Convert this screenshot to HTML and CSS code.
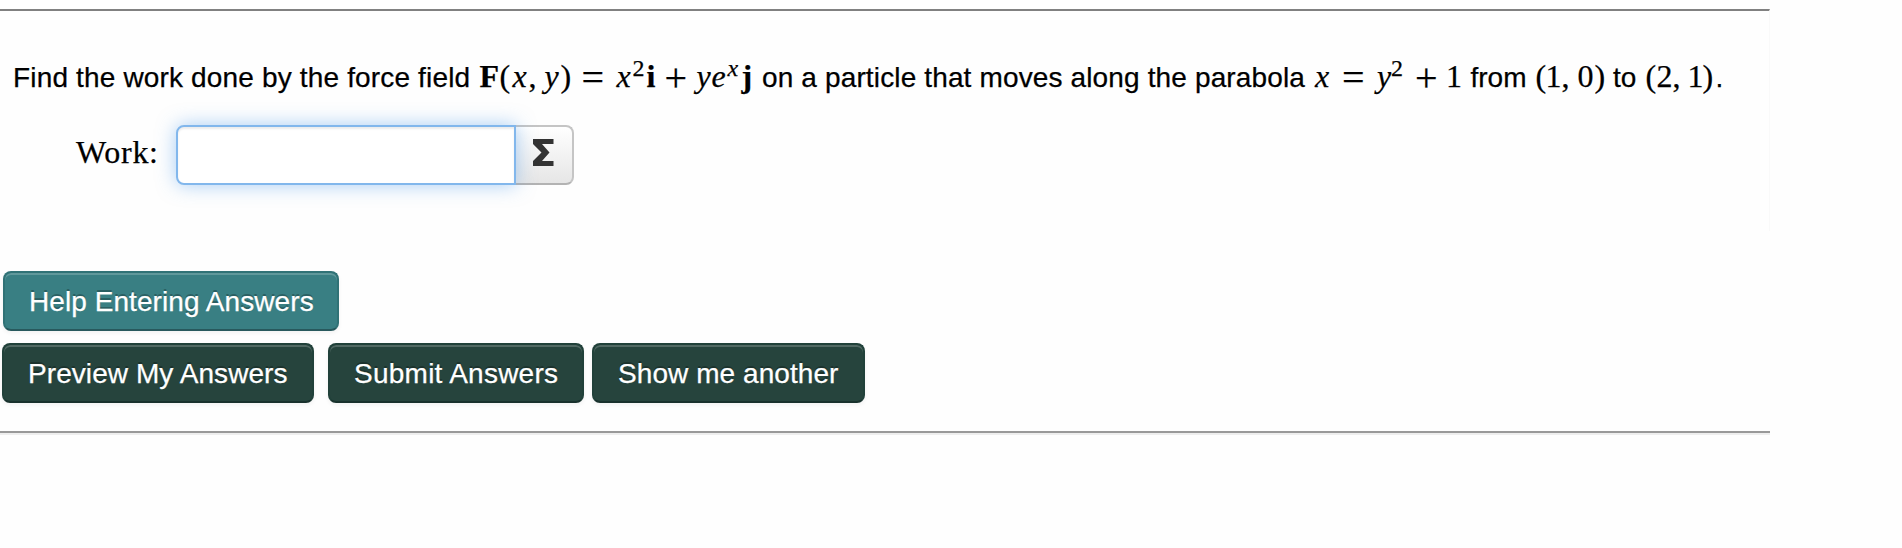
FILE: index.html
```html
<!DOCTYPE html>
<html lang="en">
<head>
<meta charset="utf-8">
<title>Work done by a force field</title>
<link rel="stylesheet" href="styles.css">
</head>
<body>
<main class="page">
  <section class="problem">
    <p class="statement">
      <span class="copy intro">Find the work done by the force field</span>
      <span class="math field"><b class="w20">F</b><span class="w13">(</span><i class="w16">x</i><span class="w16">,</span><i class="w16">y</i><span class="w20">)</span><span class="op w36">=</span><i class="w16">x</i><sup class="w14">2</sup><b class="w17">i</b><span class="op w33">+</span><i class="w15">y</i><i class="w16">e</i><sup class="w14"><i>x</i></sup><b class="w20">j</b></span>
      <span class="copy middle">on a particle that moves along the parabola</span>
      <span class="math curve"><i class="w26">x</i><span class="op w36">=</span><i class="w14">y</i><sup class="w23">2</sup><span class="op w32">+</span><span class="w25">1</span></span>
      <span class="copy from">from</span>
      <span class="math start"><span class="w10">(</span><span class="w16">1</span><span class="w16">,</span><span class="w17">0</span><span>)</span></span>
      <span class="copy to">to</span>
      <span class="math end"><span class="w11">(</span><span class="w16">2</span><span class="w15">,</span><span class="w15">1</span><span class="w13">)</span></span>
      <span class="copy">.</span>
    </p>
    <div class="answer">
      <label class="label" for="work">Work:</label>
      <input class="field-input" id="work" type="text">
      <button class="sigma" type="button" aria-label="Equation editor"><svg width="21" height="27" viewBox="0 0 21 27"><path d="M0 0H20.500V5H9L16.500 13.500L9 22H20.500V27H0V22L8.500 13.500L0 5Z" fill="#333"/></svg></button>
    </div>
  </section>
  <div class="row help-row"><button class="btn teal" type="button">Help Entering Answers</button></div>
  <div class="row">
    <button class="btn preview" type="button">Preview My Answers</button>
    <button class="btn submit" type="button">Submit Answers</button>
    <button class="btn another" type="button">Show me another</button>
  </div>
</main>
</body>
</html>
```
FILE: styles.css
```css
* { box-sizing: border-box; }
body { margin: 0; background: #fefefe; color: #000; }
.page {
  width: 1770px;
  height: 435px;
  padding-top: 9px;
  border-bottom: 2px solid #eee;
  box-shadow: inset 0 -2px #999;
}
.problem {
  height: 222px;
  border-top: 2px solid #808080;
  border-right: 1px solid #f9f9f9;
  padding: 43px 0 0 12px;
}
.statement {
  display: flex;
  align-items: baseline;
  height: 48px;
  margin: 0;
  line-height: 44px;
  white-space: nowrap;
}
.copy {
  font: 28px/44px "Liberation Sans", Arial, sans-serif;
  -webkit-text-stroke: .25px currentColor;
}
.intro { width: 467.5px; padding-left: 1px; letter-spacing: .16px; }
.middle { width: 553px; letter-spacing: .14px; }
.from { width: 65px; }
.to { width: 32.5px; }
.math {
  display: flex;
  align-items: baseline;
  font: 32px/44px "Liberation Serif", "Times New Roman", serif;
  -webkit-text-stroke: .25px currentColor;
}
.field { width: 282.5px; }
.curve { width: 155.5px; }
.start { width: 77.5px; }
.end { width: 70px; }
.math > * { flex: none; }
.math sup { font-size: 24px; line-height: 1; vertical-align: baseline; transform: translateY(-11px); }
.math .op { font-size: 40px; line-height: 1; transform: translate(1px, 4px); }
.w10 { width: 10px; }
.w11 { width: 11px; }
.w13 { width: 13px; }
.w14 { width: 14px; }
.w15 { width: 15px; }
.w16 { width: 16px; }
.w17 { width: 17px; }
.w20 { width: 20px; }
.w23 { width: 23px; }
.w25 { width: 25px; }
.w26 { width: 26px; }
.w32 { width: 32px; }
.w33 { width: 33px; }
.w36 { width: 36px; }
.answer { display: flex; height: 60px; margin: 23px 0 0 64px; }
.label {
  width: 100px;
  font: 32px/55px "Liberation Serif", "Times New Roman", serif;
  letter-spacing: .7px;
  -webkit-text-stroke: .25px currentColor;
}
.field-input {
  width: 340px;
  height: 60px;
  padding: 8px 12px;
  border: 2px solid #82b7ec;
  border-radius: 8px 0 0 8px;
  background: #fff;
  outline: 0;
  font: 28px "Liberation Sans", Arial, sans-serif;
  box-shadow: inset 0 2px 2px rgba(0, 0, 0, .075), 0 0 19px rgba(82, 158, 236, .5);
  z-index: 1;
}
.sigma {
  display: flex;
  align-items: flex-start;
  width: 58px;
  height: 60px;
  padding: 12px 0 0 17px;
  border: 2px solid #c5c5c5;
  border-bottom-color: #b3b3b3;
  border-left: 0;
  border-radius: 0 8px 8px 0;
  background: linear-gradient(#fff, #e6e6e6);
}
.row { display: flex; padding-left: 2px; }
.help-row { margin: 40px 0 12px; padding-left: 3px; }
.btn {
  height: 60px;
  padding: 1px 0 0 24px;
  border: 2px solid #21413a;
  border-bottom-color: #19322d;
  border-radius: 8px;
  background: #26443d;
  color: #fff;
  font: 28px/55px "Liberation Sans", Arial, sans-serif;
  letter-spacing: .07px;
  text-align: left;
  text-shadow: 0 -2px rgba(0, 0, 0, .25);
  -webkit-text-stroke: .25px currentColor;
  box-shadow: inset 0 2px rgba(255, 255, 255, .2), 0 2px 4px rgba(0, 0, 0, .05);
  white-space: nowrap;
}
.teal {
  width: 336px;
  border-color: #307276 #307276 #28595d;
  background: #397f83;
}
.preview { width: 312px; margin-right: 14px; }
.submit { width: 256px; margin-right: 8px; letter-spacing: .25px; }
.another { width: 273px; }
```
